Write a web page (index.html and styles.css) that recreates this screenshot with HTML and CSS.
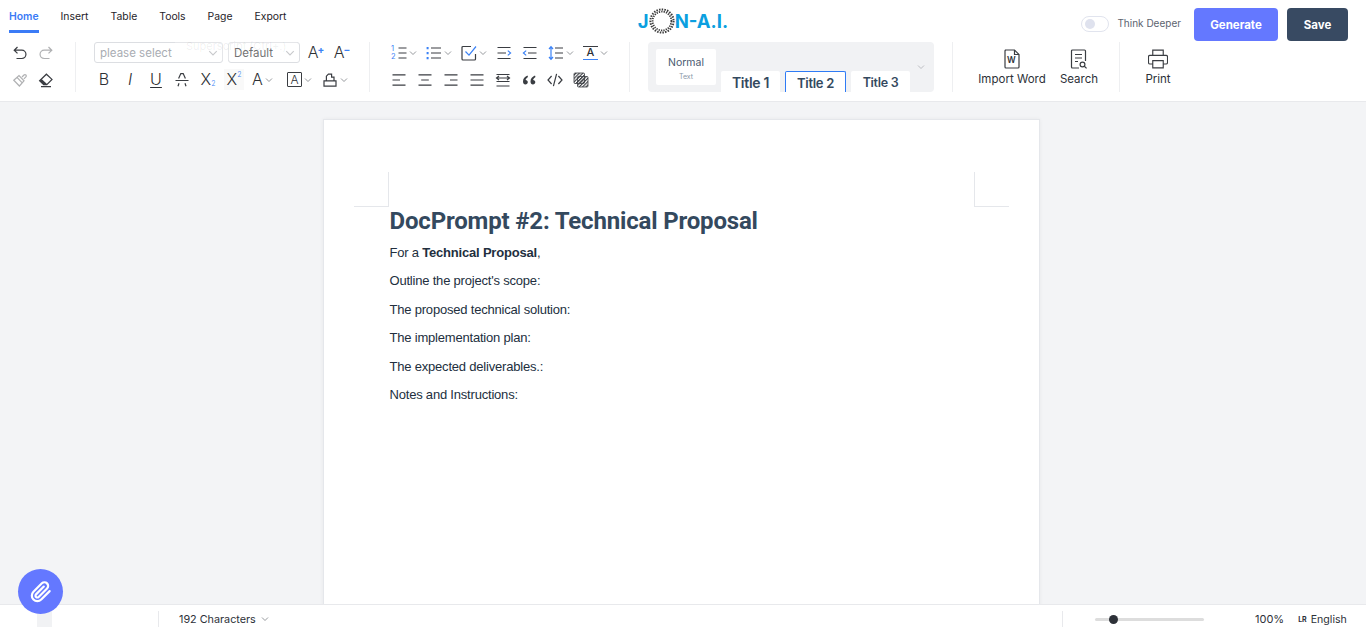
FILE: index.html
```html
<!DOCTYPE html>
<html lang="en">
<head>
    <meta charset="UTF-8">
    <meta name="viewport" content="width=device-width, initial-scale=1.0">
    <title>JON-A.I. Editor</title>
    <link rel="stylesheet" href="styles.css">
</head>
<body>
    <svg class="sprite" xmlns="http://www.w3.org/2000/svg">
        <defs>
            <pattern id="hatch" width="2.4" height="2.4" patternUnits="userSpaceOnUse" patternTransform="rotate(45)">
                <rect width="1.1" height="2.4" fill="#3a3d42"/>
            </pattern>
        </defs>
        <symbol id="undo" viewBox="0 0 16 16"><path d="M5.5 2 2.2 5.2 5.5 8.4M2.2 5.2h7.6a4 4 0 0 1 0 8.3H4.5"/></symbol>
        <symbol id="redo" viewBox="0 0 16 16"><path d="M10.5 2l3.3 3.2-3.3 3.2M13.8 5.2H6.2a4 4 0 0 0 0 8.3h5.3"/></symbol>
        <symbol id="brush" viewBox="0 0 16 16"><path d="M1.8 8.2 7 3.6l5 5.2-4.6 5.2zM5 5.4l5 5.2M10 5l2-2a1.3 1.3 0 0 1 1.9 1.9l-2 2"/></symbol>
        <symbol id="eraser" viewBox="0 0 16 16"><path d="M5.6 12.6 1.6 8.8 8.4 2.2l5.6 5.2-5.2 5.2zM3 14.6h10"/><path class="fill" d="M1.6 8.8 3.6 6.9l5.4 5-.4.7h-3z"/></symbol>
        <symbol id="strike" viewBox="0 0 16 16"><path d="M4.6 6.4 6.8 1.6h2.4l2.2 4.8M1.5 8.5h13M4 14.2l1-3M12 14.2l-1-3"/></symbol>
        <symbol id="bucket" viewBox="0 0 16 16"><path d="M2 14.2V8.8h12v5.4zM4.4 8.8V4.2l2-2h3.2v3h2.4v3.6"/></symbol>
        <symbol id="ol" viewBox="0 0 10 16"><path d="M1.5 3h8M1.5 8h8M1.5 13h8"/></symbol>
        <symbol id="ul" viewBox="0 0 16 16"><path d="M5 3h10M5 8h10M5 13h10"/><path class="blue-dash" d="M1.6 2v2.2M1.6 7v2.2M1.6 12v2.2"/></symbol>
        <symbol id="check" viewBox="0 0 16 16"><path d="M10 1.5H2a1 1 0 0 0-1 1V14a1 1 0 0 0 1 1h11.5a1 1 0 0 0 1-1V9"/><path class="blue" d="M4.5 6.5 8 10.2 15 1.5"/></symbol>
        <symbol id="indent" viewBox="0 0 16 16"><path d="M1.5 2.5h13M1.5 8h8.5M1.5 13.5h13"/><path class="blue" d="M11.8 5.6 14.6 8l-2.8 2.4"/></symbol>
        <symbol id="outdent" viewBox="0 0 16 16"><path d="M1.5 2.5h13M6 8h8.5M1.5 13.5h13"/><path class="blue" d="M4.2 5.6 1.4 8l2.8 2.4"/></symbol>
        <symbol id="lineheight" viewBox="0 0 16 16"><path d="M7 3h8M7 8h8M7 13h8"/><path class="blue" d="M3 1.5v13M1 4l2-2.4L5 4M1 12l2 2.4L5 12"/></symbol>
        <symbol id="left" viewBox="0 0 16 16"><path d="M1.5 2.8h13M1.5 8h7.5M1.5 13.2h13"/></symbol>
        <symbol id="center" viewBox="0 0 16 16"><path d="M1.5 2.8h13M4.2 8h7.6M1.5 13.2h13"/></symbol>
        <symbol id="right" viewBox="0 0 16 16"><path d="M1.5 2.8h13M7 8h7.5M1.5 13.2h13"/></symbol>
        <symbol id="justify" viewBox="0 0 16 16"><path d="M1.5 2.8h13M1.5 8h13M1.5 13.2h13"/></symbol>
        <symbol id="distribute" viewBox="0 0 16 16"><path d="M1.5 2.5h13M1.5 9.5h13M1.5 14h13M1.5 6h13M4 4 1.5 6 4 8M12 4l2.5 2L12 8"/></symbol>
        <symbol id="quote" viewBox="0 0 16 16"><path class="fill" d="M6.5 3.6C4 4.6 2 6.6 2 9.4c0 1.8 1 3 2.4 3s2.4-1 2.4-2.2-.9-2.2-2.2-2.2c.2-1.1 1-2 2.4-3zM14 3.6c-2.5 1-4.5 3-4.5 5.8 0 1.8 1 3 2.4 3s2.4-1 2.4-2.2-.9-2.2-2.2-2.2c.2-1.1 1-2 2.4-3z"/></symbol>
        <symbol id="code" viewBox="0 0 16 16"><path d="M4.6 4 1 8l3.6 4M11.4 4 15 8l-3.6 4M9.6 1.8 6.4 14.2"/></symbol>
        <symbol id="shade" viewBox="0 0 16 16"><rect class="hatched" x="1" y="1" width="10.5" height="10.5" rx="1"/><rect class="hatched" x="4.5" y="4.5" width="10.5" height="10.5" rx="1"/></symbol>
        <symbol id="worddoc" viewBox="0 0 20 20"><path d="M3 1h9.5L17 5.5V18a1 1 0 0 1-1 1H4a1 1 0 0 1-1-1V2a1 1 0 0 1 1-1z"/><path d="M12.5 1v4.5H17"/></symbol>
        <symbol id="searchdoc" viewBox="0 0 20 20"><path d="M10 19H3.5a1 1 0 0 1-1-1V2a1 1 0 0 1 1-1h12a1 1 0 0 1 1 1v10M6 5.5h7M6 9h7M6 12.5h3"/><circle cx="13.5" cy="15.5" r="2.4"/><path d="M15.3 17.3 17.6 19.4"/></symbol>
        <symbol id="printer" viewBox="0.5 0.5 21 20.5"><path d="M5.5 7V1.5h11V7M5.5 16H2.5a1.5 1.5 0 0 1-1.5-1.5V8.5A1.5 1.5 0 0 1 2.5 7h17A1.5 1.5 0 0 1 21 8.5v6a1.5 1.5 0 0 1-1.5 1.5h-3M5.5 12.5h11v7.5h-11z"/></symbol>
        <symbol id="chev" viewBox="0 0 8 8"><path d="M1 2.5 4 5.5 7 2.5"/></symbol>
    </svg>

    <header class="toolbar">
        <div class="top-row">
            <nav class="tabs">
                <a class="tab active">Home</a>
                <a class="tab">Insert</a>
                <a class="tab">Table</a>
                <a class="tab">Tools</a>
                <a class="tab">Page</a>
                <a class="tab">Export</a>
            </nav>
            <div class="logo">
                <span>J</span>
                <svg class="logo-ring" viewBox="0 0 26 26">
                    <circle cx="13" cy="13" r="11.6" stroke-width="2" stroke-dasharray="1.5 1.2"/>
                    <circle cx="13" cy="13" r="9.4" stroke-width="1.8" stroke-dasharray="1.3 1.1"/>
                </svg>
                <span>N-A.I.</span>
            </div>
            <div class="actions">
                <span class="switch"><span class="switch-dot"></span></span>
                <span class="switch-label">Think Deeper</span>
                <button class="btn btn-generate">Generate</button>
                <button class="btn btn-save">Save</button>
            </div>
        </div>

        <div class="ribbon">
            <div class="group group-first">
                <div class="row">
                    <span class="tool"><svg class="ico"><use href="#undo"/></svg></span>
                    <span class="tool muted"><svg class="ico"><use href="#redo"/></svg></span>
                </div>
                <div class="row">
                    <span class="tool muted"><svg class="ico"><use href="#brush"/></svg></span>
                    <span class="tool"><svg class="ico"><use href="#eraser"/></svg></span>
                </div>
            </div>

            <div class="group group-font">
                <div class="row row-selects">
                    <span class="select select-family"><span class="placeholder">please select</span><svg class="chev chev-lg"><use href="#chev"/></svg></span>
                    <span class="select select-size"><span>Default</span><svg class="chev chev-lg"><use href="#chev"/></svg></span>
                    <span class="tool letter grow">A<sup>+</sup></span>
                    <span class="tool letter grow">A<sup>−</sup></span>
                </div>
                <div class="row">
                    <span class="tool letter">B</span>
                    <span class="tool letter slant">I</span>
                    <span class="tool letter under">U</span>
                    <span class="tool"><svg class="ico"><use href="#strike"/></svg></span>
                    <span class="tool letter script">X<sub>2</sub></span>
                    <span class="tool letter script hovered">X<sup>2</sup></span>
                    <span class="tool has-menu"><span class="letter">A</span><svg class="chev"><use href="#chev"/></svg></span>
                    <span class="tool has-menu"><span class="letter boxed">A</span><svg class="chev"><use href="#chev"/></svg></span>
                    <span class="tool has-menu"><svg class="ico"><use href="#bucket"/></svg><svg class="chev"><use href="#chev"/></svg></span>
                </div>
                <div class="tooltip">Superscript (Ctrl+.)</div>
            </div>

            <div class="group group-para">
                <div class="row">
                    <span class="tool has-menu"><span class="ol-nums"><span>1</span><span>2</span></span><svg class="ico-lines"><use href="#ol"/></svg><svg class="chev"><use href="#chev"/></svg></span>
                    <span class="tool has-menu"><svg class="ico"><use href="#ul"/></svg><svg class="chev"><use href="#chev"/></svg></span>
                    <span class="tool has-menu"><svg class="ico"><use href="#check"/></svg><svg class="chev"><use href="#chev"/></svg></span>
                    <span class="tool"><svg class="ico"><use href="#indent"/></svg></span>
                    <span class="tool"><svg class="ico"><use href="#outdent"/></svg></span>
                    <span class="tool has-menu"><svg class="ico"><use href="#lineheight"/></svg><svg class="chev"><use href="#chev"/></svg></span>
                    <span class="tool has-menu"><span class="letter underbar">A</span><svg class="chev"><use href="#chev"/></svg></span>
                </div>
                <div class="row">
                    <span class="tool"><svg class="ico"><use href="#left"/></svg></span>
                    <span class="tool"><svg class="ico"><use href="#center"/></svg></span>
                    <span class="tool"><svg class="ico"><use href="#right"/></svg></span>
                    <span class="tool"><svg class="ico"><use href="#justify"/></svg></span>
                    <span class="tool"><svg class="ico"><use href="#distribute"/></svg></span>
                    <span class="tool"><svg class="ico"><use href="#quote"/></svg></span>
                    <span class="tool"><svg class="ico"><use href="#code"/></svg></span>
                    <span class="tool"><svg class="ico"><use href="#shade"/></svg></span>
                </div>
            </div>

            <div class="group group-styles">
                <div class="styles-box">
                    <div class="style-card style-normal">
                        <span class="style-name">Normal</span>
                        <span class="style-sub">Text</span>
                    </div>
                    <div class="style-card style-title">Title 1</div>
                    <div class="style-card style-title style-current">Title 2</div>
                    <div class="style-card style-title style-small">Title 3</div>
                    <svg class="chev styles-chev"><use href="#chev"/></svg>
                </div>
            </div>

            <div class="group group-big">
                <div class="big-tool tool-word">
                    <span class="doc-icon"><svg class="big-ico"><use href="#worddoc"/></svg><span class="doc-letter">W</span></span>
                    <span>Import Word</span>
                </div>
                <div class="big-tool tool-search"><svg class="big-ico"><use href="#searchdoc"/></svg><span>Search</span></div>
            </div>

            <div class="group group-print">
                <div class="big-tool"><svg class="big-ico"><use href="#printer"/></svg><span>Print</span></div>
            </div>
        </div>
    </header>

    <main class="workspace">
        <article class="page">
            <span class="corner corner-left"></span>
            <span class="corner corner-right"></span>
            <h1>DocPrompt #2: Technical Proposal</h1>
            <p>For a <strong>Technical Proposal</strong>,</p>
            <p>Outline the project's scope:</p>
            <p>The proposed technical solution:</p>
            <p>The implementation plan:</p>
            <p>The expected deliverables.:</p>
            <p>Notes and Instructions:</p>
        </article>
    </main>

    <footer class="statusbar">
        <span class="status-block"></span>
        <div class="status-count">
            <span>192 Characters</span>
            <svg class="chev"><use href="#chev"/></svg>
        </div>
        <div class="status-right">
            <div class="zoom-slider"><span class="zoom-knob"></span></div>
            <span class="zoom-value">100%</span>
            <span class="lang-mark">LR</span>
            <span class="lang">English</span>
        </div>
    </footer>

    <button class="fab">
        <svg viewBox="0 0 24 24"><path d="M21.44 11.05l-9.19 9.19a6 6 0 0 1-8.49-8.49l9.19-9.19a4 4 0 0 1 5.66 5.66l-9.2 9.19a2 2 0 0 1-2.83-2.83l8.49-8.48"/></svg>
    </button>
</body>
</html>
```

FILE: styles.css
```css
* {
    box-sizing: border-box;
}
html, body {
    height: 100%;
}
body {
    margin: 0;
    display: flex;
    flex-direction: column;
    overflow: hidden;
    font-family: Inter, "Noto Sans", sans-serif;
    font-size: 11px;
    color: #2d3138;
    background-color: #f3f4f6;
}
.sprite {
    width: 0;
    height: 0;
    position: absolute;
}
symbol path, symbol circle {
    fill: none;
    stroke: #3a3d42;
    stroke-width: 1.2;
}
.chev {
    fill: none;
}
#chev path {
    stroke: inherit;
    stroke-width: inherit;
}
symbol .fill {
    fill: #3a3d42;
    stroke: none;
}
symbol .blue {
    stroke: #3b82f6;
}
symbol .blue-dash {
    stroke: #3b82f6;
    stroke-width: 2;
}
symbol .hatched {
    fill: url(#hatch);
    stroke: #3a3d42;
    stroke-width: 0.8;
}

/* toolbar */
.toolbar {
    height: 102px;
    flex: none;
    background-color: #fff;
    border-bottom: 1px solid #e8e9ec;
}
.top-row {
    height: 42px;
    display: grid;
    grid-template-columns: 1fr auto 1fr;
}
.tabs {
    display: flex;
    gap: 22px;
    padding-left: 9px;
}
.tab {
    height: 33px;
    padding-top: 10px;
    font-size: 10.4px;
    font-weight: 400;
    line-height: 14px;
    color: #1f2329;
}
.tab.active {
    color: #3b7bf6;
    font-weight: 600;
    border-bottom: 3px solid #3b7bf6;
}
.logo {
    display: flex;
    align-items: center;
    height: 42px;
    padding-bottom: 1px;
    font-size: 18.5px;
    font-weight: 700;
    color: #0b9fe0;
}
.logo-ring {
    width: 26px;
    height: 26px;
    fill: none;
    stroke: #3c3c3c;
}
.actions {
    display: flex;
    align-items: flex-start;
    justify-content: flex-end;
    padding: 8px 18px 0 0;
}
.switch {
    width: 28px;
    height: 16px;
    margin-top: 8px;
    padding: 2px 3px;
    background-color: #fff;
    border: 1px solid #e1e4ee;
    border-radius: 8px;
}
.switch-dot {
    display: block;
    width: 10px;
    height: 10px;
    border-radius: 50%;
    background-color: #dfe2ee;
}
.switch-label {
    margin: 8px 13px 0 8px;
    line-height: 15px;
    font-size: 10px;
    color: #5c6470;
}
.btn {
    height: 33px;
    border: 0;
    border-radius: 4px;
    color: #fff;
    font-family: inherit;
    font-size: 11.5px;
    font-weight: 700;
}
.btn-generate {
    width: 84px;
    margin-right: 9px;
    background-color: #6478ff;
}
.btn-save {
    width: 61px;
    background-color: #384a62;
}

/* ribbon */
.ribbon {
    display: flex;
    height: 50px;
    padding-left: 10px;
}
.group {
    position: relative;
    display: flex;
    flex-direction: column;
    gap: 6px;
    padding-right: 19px;
    margin-right: 18px;
    border-right: 1px solid #eeeff1;
}
.row {
    display: flex;
    align-items: center;
    gap: 6px;
    height: 21px;
}
.tool {
    display: flex;
    align-items: center;
    justify-content: center;
    flex: none;
    width: 20px;
    height: 21px;
    color: #3a3d42;
}
.tool.has-menu {
    width: 29px;
    justify-content: flex-start;
    padding-left: 2px;
}
.tool.muted .ico {
    opacity: 0.4;
}
.ico {
    width: 16px;
    height: 16px;
    flex: none;
}
.ico-lines {
    width: 10px;
    height: 16px;
    flex: none;
}
.ol-nums {
    display: flex;
    flex-direction: column;
    width: 6px;
    font-size: 7.5px;
    line-height: 8px;
    color: #3b82f6;
}
.chev {
    width: 8px;
    height: 8px;
    margin-left: 2px;
    flex: none;
    stroke: #8a8d92;
    stroke-width: 0.9;
}
.chev-lg {
    width: 10px;
    height: 10px;
    margin-left: auto;
    stroke: #b5b7bb;
}
.letter {
    font-size: 16px;
    font-weight: 300;
    line-height: 21px;
    color: #2d3035;
}
.slant {
    font-style: italic;
}
.under {
    text-decoration: underline;
    text-underline-offset: 2px;
    text-decoration-thickness: 1px;
}
.script sub, .script sup {
    font-size: 7px;
    line-height: 8px;
    color: #3b82f6;
}
.script sub {
    align-self: flex-end;
    margin-bottom: 2px;
}
.script sup {
    align-self: flex-start;
    margin-top: 2px;
}
.grow sup {
    align-self: flex-start;
    margin: 2px 0 0 -1px;
    font-size: 10px;
    font-weight: 700;
    line-height: 10px;
    color: #3b82f6;
}
.hovered {
    background-color: #f9f9f9;
}
.boxed {
    display: flex;
    align-items: center;
    justify-content: center;
    width: 15px;
    height: 15px;
    font-size: 12px;
    border: 1px solid #3a3d42;
    border-radius: 1px;
}
.underbar {
    display: flex;
    align-items: center;
    justify-content: center;
    width: 15px;
    height: 14px;
    font-size: 11px;
    font-weight: 500;
    border-top: 1px solid #3a3d42;
    border-bottom: 1px solid #3b82f6;
}
.select {
    display: flex;
    align-items: center;
    height: 21px;
    padding: 0 4px 0 5px;
    font-size: 11.5px;
    color: #444;
    border: 1px solid #dcdee2;
    border-radius: 3px;
}
.placeholder {
    color: #a9adb3;
}
.select-family {
    width: 129px;
}
.select-size {
    width: 72px;
}
.row-selects {
    gap: 5px;
}
.row-selects .tool {
    margin-left: 1px;
}
.group-font {
    width: 276px;
    padding-right: 0;
    margin-right: 19px;
}
.tooltip {
    position: absolute;
    top: -9px;
    left: 81px;
    padding: 0 11px;
    height: 27px;
    line-height: 26px;
    font-size: 11px;
    white-space: nowrap;
    color: rgba(60, 60, 60, 0.08);
    background-color: rgba(255, 255, 255, 0.25);
    border-radius: 3px;
}
.group-first {
    width: 66px;
}
.group-styles {
    padding-right: 18px;
    margin-right: 0;
}
.styles-box {
    position: relative;
    display: flex;
    align-items: flex-end;
    gap: 5px;
    width: 286px;
    height: 50px;
    padding-left: 8px;
    overflow: hidden;
    background-color: #f1f2f4;
    border-radius: 4px;
}
.style-card {
    width: 59px;
    flex: none;
    text-align: center;
    background-color: #fff;
    border-radius: 2px 2px 0 0;
    color: #34495e;
}
.style-normal {
    display: flex;
    flex-direction: column;
    align-items: center;
    justify-content: center;
    gap: 3px;
    width: 60px;
    height: 36px;
    padding-top: 2px;
    margin-bottom: 7px;
    border-radius: 2px;
    font-size: 11px;
}
.style-name {
    font-size: 10.5px;
    color: #4a5a70;
}
.style-sub {
    font-size: 7px;
    color: #8a98a8;
}
.style-title {
    height: 21px;
    line-height: 23px;
    font-size: 14px;
    font-weight: 600;
    letter-spacing: -0.3px;
}
.style-current {
    width: 61px;
    font-size: 13px;
    line-height: 22px;
    border: 1px solid #2f7bf5;
    border-bottom: 0;
}
.style-small {
    font-size: 12.5px;
}
.styles-chev {
    position: absolute;
    top: 21px;
    right: 9px;
    stroke: #b5b7bb;
}
.group-big {
    flex-direction: row;
    align-items: flex-start;
    gap: 0;
    padding: 0;
    margin-right: 0;
    width: 167px;
}
.group-print {
    border-right: 0;
    width: 76px;
    align-items: center;
    margin-right: 0;
    padding: 0;
}
.big-tool {
    display: flex;
    flex-direction: column;
    align-items: center;
    gap: 3px;
    padding-top: 7px;
    font-size: 11.5px;
    line-height: 14px;
    white-space: nowrap;
}
.big-ico {
    display: block;
    width: 20px;
    height: 20px;
}
.doc-icon {
    position: relative;
    display: block;
    height: 20px;
}
.doc-letter {
    position: absolute;
    left: 5px;
    top: 6px;
    font-size: 8.5px;
    font-weight: 600;
    line-height: 10px;
}
.tool-word {
    width: 118px;
}
.tool-search {
    width: 14px;
    margin-left: 1px;
}

/* document */
.workspace {
    flex: 1;
    min-height: 0;
    overflow: hidden;
    padding: 17px 3px 0 0;
}
.page {
    position: relative;
    width: 717px;
    height: 900px;
    margin: 0 auto;
    padding: 83px 66px 0 65.5px;
    background-color: #fff;
    border: 1px solid #e5e7eb;
    box-shadow: 0 0 4px rgba(0, 0, 0, 0.05);
    font-family: "Liberation Sans", Arial, sans-serif;
    font-size: 13px;
    letter-spacing: -0.2px;
    color: #222f3e;
}
.page h1 {
    margin: 0 0 3px;
    font-family: Roboto, sans-serif;
    font-size: 24px;
    font-weight: 700;
    line-height: 36px;
    letter-spacing: -0.17px;
    color: #34495e;
}
.page p {
    margin: 0 0 7.4px;
    line-height: 21px;
}
.corner {
    position: absolute;
    top: 52px;
    width: 35px;
    height: 35px;
    border-bottom: 1px solid #e5e7eb;
}
.corner-left {
    left: 30px;
    border-right: 1px solid #e5e7eb;
}
.corner-right {
    right: 30px;
    border-left: 1px solid #e5e7eb;
}

/* status bar */
.statusbar {
    display: flex;
    justify-content: space-between;
    flex: none;
    height: 27px;
    background-color: #fff;
    border-top: 1px solid #e8e9ec;
}
.status-block {
    position: absolute;
    left: 37px;
    bottom: 4px;
    width: 15px;
    height: 22px;
    background-color: #f1f2f4;
}
.status-count {
    display: flex;
    align-items: center;
    height: 16px;
    margin: 6px 0 0 158px;
    padding-left: 20px;
    border-left: 1px solid #e8e9ec;
    font-size: 10.8px;
}
.status-count .chev {
    margin-left: 5px;
}
.status-right {
    display: flex;
    align-items: center;
    width: 304px;
    height: 16px;
    margin-top: 6px;
    padding-left: 32px;
    border-left: 1px solid #e8e9ec;
}
.zoom-slider {
    position: relative;
    width: 109px;
    height: 3px;
    background-color: #dddddd;
    border-radius: 2px;
}
.zoom-knob {
    position: absolute;
    left: 14px;
    top: -3px;
    width: 9px;
    height: 9px;
    border-radius: 50%;
    background-color: #2d3138;
}
.zoom-value {
    margin-left: 51px;
}
.lang-mark {
    margin-left: 14px;
    font-size: 7px;
    font-weight: 700;
}
.lang {
    margin-left: 4px;
    font-size: 10.6px;
}
.fab {
    position: absolute;
    left: 18px;
    top: 569px;
    width: 45px;
    height: 45px;
    padding: 0;
    display: flex;
    align-items: center;
    justify-content: center;
    border: 0;
    border-radius: 50%;
    background-color: #6478ff;
}
.fab svg {
    width: 22px;
    height: 22px;
    fill: none;
    stroke: #fff;
    stroke-width: 2.4;
    stroke-linecap: round;
    stroke-linejoin: round;
}
```
